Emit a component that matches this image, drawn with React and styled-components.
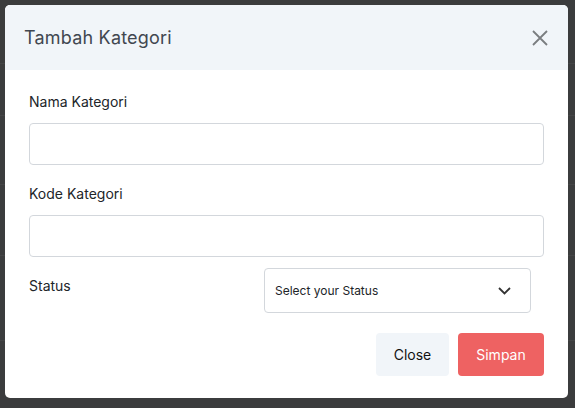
import React from 'react';
import styled, { createGlobalStyle } from 'styled-components';

const Global = createGlobalStyle`
  html, body { margin: 0; padding: 0; }
  body {
    width: 575px;
    height: 408px;
    overflow: hidden;
    font-family: Inter, "Noto Sans", sans-serif;
  }
`;

const Backdrop = styled.div`
  width: 575px;
  height: 408px;
  box-sizing: border-box;
  padding: 5px 7px 10px 5px;
  background-color: #3b3c3d;
  background-image:
    linear-gradient(#444546, #444546),
    linear-gradient(#444546, #444546),
    linear-gradient(#444546, #444546),
    linear-gradient(#444546, #444546),
    linear-gradient(#444546, #444546);
  background-size: 100% 1px;
  background-repeat: no-repeat;
  background-position: 0 63px, 0 115px, 0 184px, 0 255px, 0 340px;
`;

const Modal = styled.div`
  width: 563px;
  height: 393px;
  background: #fff;
  border-radius: 5px;
  overflow: hidden;
  display: flex;
  flex-direction: column;
`;

const Header = styled.div`
  height: 65px;
  background: #f1f5f9;
  display: flex;
  align-items: center;
  justify-content: space-between;
  padding: 0 19px;
`;

const Title = styled.h2`
  margin: 0;
  font-size: 18px;
  font-weight: 400;
  color: #414750;
  letter-spacing: 0.2px;
`;

const CloseIcon = styled.button`
  border: none;
  background: none;
  padding: 0;
  width: 18px;
  height: 18px;
  cursor: pointer;
  display: flex;
`;

const Body = styled.div`
  padding: 22px 24px 22px;
  display: flex;
  flex-direction: column;
`;

const Field = styled.div`
  display: flex;
  flex-direction: column;
  margin-bottom: ${(p) => p.mb || 0}px;
`;

const Label = styled.label`
  font-size: 14px;
  line-height: 20px;
  color: #212529;
  margin-bottom: 11px;
`;

const Input = styled.input`
  height: 42px;
  box-sizing: border-box;
  border: 1px solid #d3d7dc;
  border-radius: 4px;
  padding: 0 10px;
  font-size: 14px;
  font-family: inherit;
  outline: none;
`;

const StatusRow = styled.div`
  display: flex;
  align-items: flex-start;
  margin-top: 11px;
`;

const StatusLabel = styled.label`
  width: 235px;
  font-size: 14px;
  line-height: 20px;
  color: #212529;
  padding-top: 8px;
`;

const SelectBox = styled.div`
  width: 267px;
  height: 45px;
  box-sizing: border-box;
  border: 1px solid #d3d7dc;
  border-radius: 4px;
  display: flex;
  align-items: center;
  justify-content: space-between;
  padding: 0 19px 0 10px;
  font-size: 12px;
  color: #212529;
`;

const Footer = styled.div`
  display: flex;
  justify-content: flex-end;
  gap: 9px;
  margin-top: 20px;
`;

const Button = styled.button`
  height: 43px;
  width: ${(p) => p.w}px;
  padding: 0;
  border: none;
  border-radius: 4px;
  font-family: inherit;
  font-size: 14px;
  background: ${(p) => (p.primary ? '#ee6262' : '#f1f5f9')};
  color: ${(p) => (p.primary ? '#fff' : '#111')};
  cursor: pointer;
`;

export default function App() {
  return (
    <>
      <Global />
      <Backdrop>
        <Modal>
          <Header>
            <Title>Tambah Kategori</Title>
            <CloseIcon aria-label="close">
              <svg width="18" height="18" viewBox="0 0 18 18">
                <path d="M2 2 L16 16 M16 2 L2 16" stroke="#7a7d80" strokeWidth="1.8" fill="none" />
              </svg>
            </CloseIcon>
          </Header>
          <Body>
            <Field mb={19}>
              <Label>Nama Kategori</Label>
              <Input />
            </Field>
            <Field>
              <Label>Kode Kategori</Label>
              <Input />
            </Field>
            <StatusRow>
              <StatusLabel>Status</StatusLabel>
              <SelectBox>
                <span>Select your Status</span>
                <svg width="13" height="8" viewBox="0 0 13 8">
                  <path d="M1 1 L6.5 6.5 L12 1" stroke="#333" strokeWidth="1.8" fill="none" />
                </svg>
              </SelectBox>
            </StatusRow>
            <Footer>
              <Button w={73}>Close</Button>
              <Button primary w={86}>Simpan</Button>
            </Footer>
          </Body>
        </Modal>
      </Backdrop>
    </>
  );
}
